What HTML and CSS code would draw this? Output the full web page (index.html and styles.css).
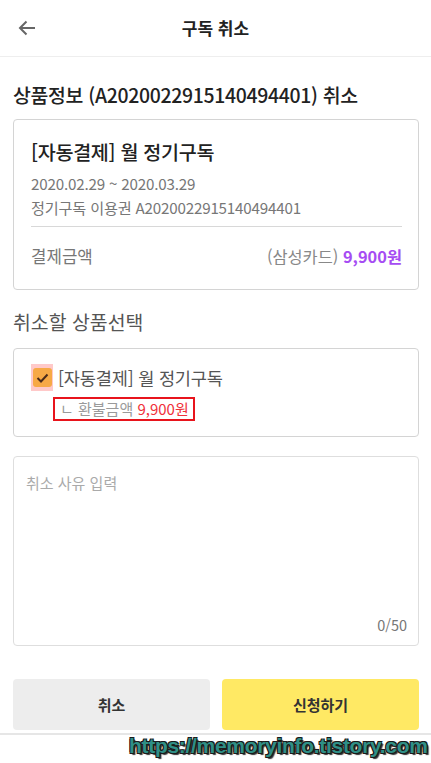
FILE: index.html
```html
<!DOCTYPE html>
<html lang="ko">
<head>
<meta charset="utf-8">
<link rel="stylesheet" href="styles.css">
</head>
<body>
<div class="app">
  <header class="topbar">
    <span class="back">
      <svg width="18" height="16" viewBox="0 0 18 16"><path d="M17 8H2.5M8.5 1.5L2 8l6.5 6.5" fill="none" stroke="#666" stroke-width="2"/></svg>
    </span>
    <h1 class="title">구독 취소</h1>
  </header>

  <main class="content">
    <h2 class="sec-title">상품정보 (A2020022915140494401) 취소</h2>
    <section class="card info">
      <div class="prod-name">[자동결제] 월 정기구독</div>
      <div class="meta">2020.02.29 ~ 2020.03.29</div>
      <div class="meta">정기구독 이용권 A2020022915140494401</div>
      <div class="divider"></div>
      <div class="pay-row">
        <span class="pay-label">결제금액</span>
        <span class="pay-val"><span class="card-name">(삼성카드)</span> <b class="price">9,900원</b></span>
      </div>
    </section>

    <h3 class="sec-sub">취소할 상품선택</h3>
    <section class="card select">
      <div class="check-row">
        <span class="hl"><span class="cb">
          <svg width="13" height="10" viewBox="0 0 13 10"><path d="M1.5 5l3.5 3.5L11.5 1.5" fill="none" stroke="#4a2a1a" stroke-width="2"/></svg>
        </span></span>
        <span class="check-label">[자동결제] 월 정기구독</span>
      </div>
      <div class="refund"><span class="refund-label">ㄴ 환불금액</span> <span class="refund-price">9,900원</span></div>
    </section>

    <section class="card reason">
      <div class="placeholder">취소 사유 입력</div>
      <div class="counter">0/50</div>
    </section>

    <div class="actions">
      <button class="btn btn-cancel">취소</button>
      <button class="btn btn-apply">신청하기</button>
    </div>
  </main>
  <div class="bottom-line"></div>
  <div class="watermark">https://memoryinfo.tistory.com</div>
</div>
</body>
</html>
```

FILE: styles.css
```css
* { box-sizing: border-box; }
html, body { margin: 0; padding: 0; background: #fff; }
body {
  font-family: "Noto Sans CJK KR", "Noto Sans", sans-serif;
  color: #222;
  width: 431px;
  height: 763px;
  overflow: hidden;
}
.app { position: relative; height: 763px; }

.topbar {
  height: 57px;
  border-bottom: 1px solid #eeeeee;
  display: flex;
  align-items: center;
  justify-content: center;
  position: relative;
}
.back { position: absolute; left: 18px; top: 20px; display: flex; }
.title { margin: 0; font-size: 17px; font-weight: 700; color: #222; line-height: 24px; }

.content { padding: 0 12px 0 13px; display: flex; flex-direction: column; }

.sec-title {
  margin: 24px 0 0;
  font-size: 19.4px;
  line-height: 28px;
  font-weight: 500;
  color: #222;
  letter-spacing: -0.3px;
}
.card {
  border: 1px solid #d4d4d4;
  border-radius: 4px;
  background: #fff;
}
.info { margin-top: 10px; padding: 18px 16px 21px 17px; }
.prod-name { font-size: 19.6px; line-height: 28px; font-weight: 500; color: #222; letter-spacing: -0.3px; }
.meta { font-size: 15.2px; line-height: 24px; color: #777; letter-spacing: -0.2px; }
.prod-name + .meta { margin-top: 5px; }
.divider { height: 1px; background: #d8d8d8; margin-top: 7px; }
.pay-row { margin-top: 17px; display: flex; justify-content: space-between; align-items: center; line-height: 24px; }
.pay-label { font-size: 16.8px; color: #777; }
.pay-val { font-size: 16.4px; }
.card-name { color: #888; }
.price { color: #a64cf3; font-weight: 700; }

.sec-sub { margin: 19px 0 0; font-size: 19.4px; line-height: 26px; font-weight: 400; color: #555; }
.select { margin-top: 13px; padding: 15px 17px 15px 17px; display: flex; flex-direction: column; }
.check-row { display: flex; align-items: center; line-height: 26px; }
.hl {
  width: 22px; height: 27px;
  background: #ffc9c9;
  display: flex; align-items: center; justify-content: center;
  margin-right: 5px;
}
.cb {
  width: 19px; height: 19px;
  background: #f7a946;
  border-radius: 3px;
  display: flex; align-items: center; justify-content: center;
}
.check-label { font-size: 17.6px; color: #555; letter-spacing: -0.2px; }
.refund {
  margin: 6px 0 0 22px;
  align-self: flex-start;
  border: 2px solid #e8141c;
  padding: 0 4px 0 5px;
  font-size: 15px;
  line-height: 20px;
}
.refund-label { color: #9a9a9a; }
.refund-price { color: #f0313a; }

.reason {
  margin-top: 19px;
  height: 190px;
  padding: 14px 11px 8px 12px;
  display: flex;
  flex-direction: column;
  justify-content: space-between;
  border-color: #dedede;
}
.placeholder { font-size: 15px; line-height: 24px; color: #aaa; }
.counter { align-self: flex-end; font-size: 14.5px; line-height: 24px; color: #777; }

.actions { margin-top: 33px; display: flex; gap: 12px; }
.btn {
  flex: 1;
  height: 51px;
  border: 0;
  border-radius: 4px;
  font-family: inherit;
  font-size: 15px;
  font-weight: 700;
  color: #333;
}
.btn-cancel { background: #ededed; }
.btn-apply { background: #ffe964; }

.bottom-line { height: 2px; background: #e6e6e6; margin-top: 3px; }

.watermark {
  position: absolute;
  left: 129px;
  top: 733px;
  font-family: "Liberation Sans", Arial, sans-serif;
  font-weight: 700;
  font-size: 21px;
  line-height: 26px;
  letter-spacing: -0.3px;
  color: #2f8f86;
  text-shadow: 1px 1px 0 #1a1a1a, -1px -1px 0 #1a1a1a, 1px -1px 0 #1a1a1a, -1px 1px 0 #1a1a1a, 2px 2px 1px #333;
  white-space: nowrap;
}
```
